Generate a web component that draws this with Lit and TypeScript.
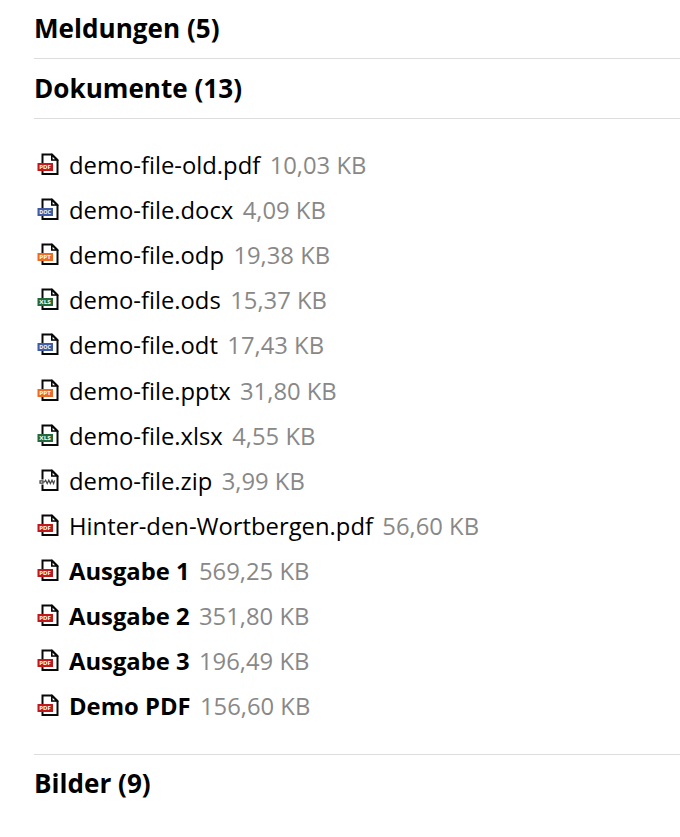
import { LitElement, html, svg, css } from "lit";
import { customElement, property } from "lit/decorators.js";

type Kind = "pdf" | "doc" | "ppt" | "xls" | "zip";

interface Doc {
  name: string;
  size: string;
  kind: Kind;
  strong?: boolean;
}

const DOCS: Doc[] = [
  { name: "demo-file-old.pdf", size: "10,03 KB", kind: "pdf" },
  { name: "demo-file.docx", size: "4,09 KB", kind: "doc" },
  { name: "demo-file.odp", size: "19,38 KB", kind: "ppt" },
  { name: "demo-file.ods", size: "15,37 KB", kind: "xls" },
  { name: "demo-file.odt", size: "17,43 KB", kind: "doc" },
  { name: "demo-file.pptx", size: "31,80 KB", kind: "ppt" },
  { name: "demo-file.xlsx", size: "4,55 KB", kind: "xls" },
  { name: "demo-file.zip", size: "3,99 KB", kind: "zip" },
  { name: "Hinter-den-Wortbergen.pdf", size: "56,60 KB", kind: "pdf" },
  { name: "Ausgabe 1", size: "569,25 KB", kind: "pdf", strong: true },
  { name: "Ausgabe 2", size: "351,80 KB", kind: "pdf", strong: true },
  { name: "Ausgabe 3", size: "196,49 KB", kind: "pdf", strong: true },
  { name: "Demo PDF", size: "156,60 KB", kind: "pdf", strong: true },
];

@customElement("file-icon")
export class FileIcon extends LitElement {
  @property() kind: Kind = "pdf";

  static styles = css`
    :host { display: block; width: 24px; height: 24px; }
    svg { display: block; }
    .page { fill: #fff; stroke: #080808; stroke-width: 2; }
    .fold { fill: #080808; stroke: #080808; stroke-width: 1.2; }
    .corner { fill: #fff; }
    .pdf { fill: #c0181c; }
    .doc { fill: #405ca6; }
    .ppt { fill: #ed6b24; }
    .xls { fill: #24693b; }
    .label { fill: #fff; font: 700 5.6px "Open Sans", sans-serif; }
    .gap { stroke: #fff; stroke-width: 5; }
    .zipper { fill: none; stroke: #444; stroke-width: 1.2; }
  `;

  render() {
    return html`<svg width="24" height="24" viewBox="0 0 24 24" aria-hidden="true">
      <path class="page" d="M6.5 2.4H16L21.5 8V22H6.5Z" />
      <path class="fold" d="M15.6 2.6V8.2H21.4Z" />
      <path class="corner" d="M16.6 4.8V7.2H19Z" />
      ${this.kind === "zip"
        ? svg`<path class="gap" d="M5 14H8" />
            <path class="zipper" d="M4 12.8H7V15.2H4ZM7 14H8.4L9.6 12.2L11.2 15.6L12.8 12.2L14.4 15.6L16 12.2L17.6 15.6L18.6 12.4" />`
        : svg`<rect class=${this.kind} x="1.5" y="11" width="15.5" height="8" />
            <text class="label" x="3.3" y="17" textLength="11.6" lengthAdjust="spacingAndGlyphs">${this.kind.toUpperCase()}</text>`}
    </svg>`;
  }
}

@customElement("app-root")
export class AppRoot extends LitElement {
  static styles = css`
    :host {
      display: block;
      height: 837px;
      overflow: hidden;
      background: #fff;
      color: #000;
      font-family: "Open Sans", sans-serif;
    }
    .accordion { padding-left: 34px; }
    .heading {
      box-sizing: border-box;
      height: 60px;
      margin: 0;
      font-size: 26.1px;
      font-weight: 700;
      line-height: 58px;
      border-bottom: 1px solid #ddd;
    }
    .first { height: 59px; line-height: 56px; }
    .last { border-bottom: 0; line-height: 57px; }
    .list {
      box-sizing: border-box;
      list-style: none;
      height: 636px;
      margin: 0;
      padding: 24.1px 0 0 2px;
      border-bottom: 1px solid #ddd;
    }
    .row {
      display: flex;
      align-items: flex-start;
      height: 45.1px;
      font-size: 23.8px;
      line-height: 45px;
      white-space: nowrap;
    }
    .name { margin-left: 9px; }
    .strong { font-weight: 700; }
    .size { margin-left: 9.4px; color: #888; }
    .icon { margin-top: 9px; }
  `;

  private heading(title: string, count: number, extra = "") {
    return html`<h3 class="heading ${extra}">${title} (${count})</h3>`;
  }

  render() {
    return html`<div class="accordion">
      ${this.heading("Meldungen", 5, "first")}
      ${this.heading("Dokumente", DOCS.length)}
      <ul class="list">
        ${DOCS.map(
          (d) => html`<li class="row">
            <file-icon class="icon" kind=${d.kind}></file-icon>
            <span class="name ${d.strong ? "strong" : ""}">${d.name}</span>
            <span class="size">${d.size}</span>
          </li>`
        )}
      </ul>
      ${this.heading("Bilder", 9, "last")}
    </div>`;
  }
}
